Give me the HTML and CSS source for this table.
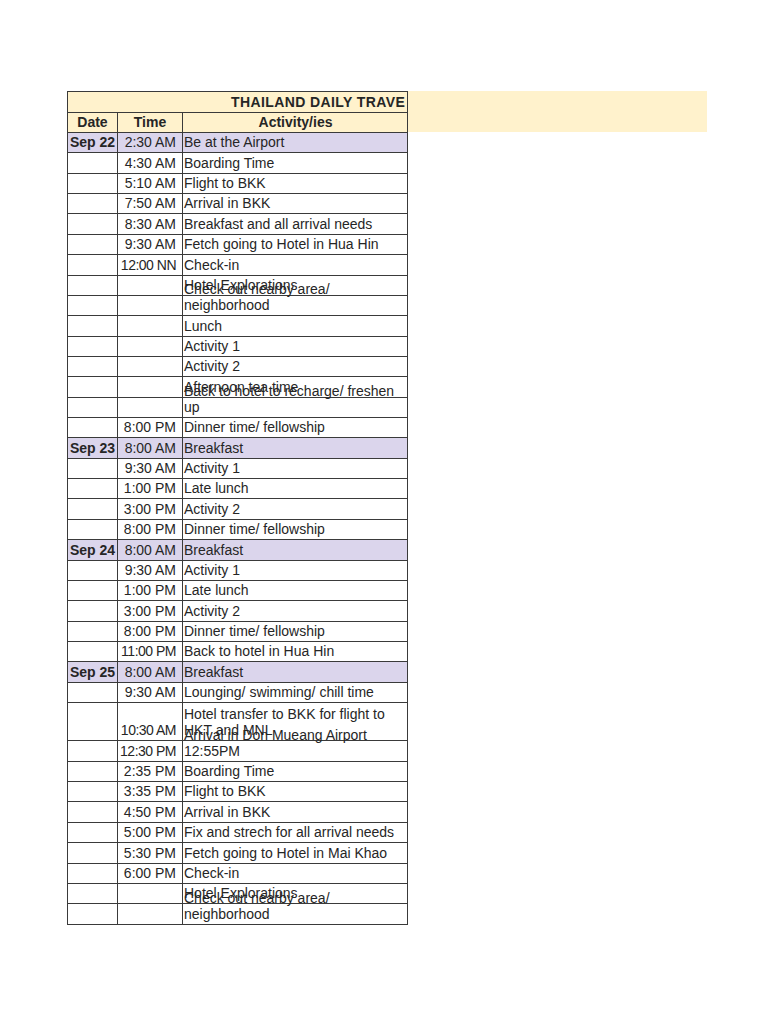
FILE: index.html
```html
<!DOCTYPE html>
<html lang="en">
<head>
<meta charset="utf-8">
<title>Thailand Daily Travel Itinerary</title>
<link rel="stylesheet" href="styles.css">
</head>
<body>
<div class="page">
  <div class="sheet-wrap">
    <div class="sheet">
      <div class="row title"><div class="cell title-cell"><span>THAILAND DAILY TRAVE</span></div></div>
      <div class="row head">
        <div class="cell c-date"><span>Date</span></div>
        <div class="cell c-time"><span>Time</span></div>
        <div class="cell c-act"><span>Activity/ies</span></div>
      </div>

      <div class="row day"><div class="cell c-date"><span>Sep 22</span></div><div class="cell c-time"><span>2:30 AM</span></div><div class="cell c-act"><span>Be at the Airport</span></div></div>
      <div class="row"><div class="cell c-date"></div><div class="cell c-time"><span>4:30 AM</span></div><div class="cell c-act"><span>Boarding Time</span></div></div>
      <div class="row"><div class="cell c-date"></div><div class="cell c-time"><span>5:10 AM</span></div><div class="cell c-act"><span>Flight to BKK</span></div></div>
      <div class="row"><div class="cell c-date"></div><div class="cell c-time"><span>7:50 AM</span></div><div class="cell c-act"><span>Arrival in BKK</span></div></div>
      <div class="row"><div class="cell c-date"></div><div class="cell c-time"><span>8:30 AM</span></div><div class="cell c-act"><span>Breakfast and all arrival needs</span></div></div>
      <div class="row"><div class="cell c-date"></div><div class="cell c-time"><span>9:30 AM</span></div><div class="cell c-act"><span>Fetch going to Hotel in Hua Hin</span></div></div>
      <div class="row"><div class="cell c-date"></div><div class="cell c-time"><span class="narrow">12:00 NN</span></div><div class="cell c-act"><span>Check-in</span></div></div>
      <div class="row"><div class="cell c-date"></div><div class="cell c-time"></div><div class="cell c-act"><span>Hotel Explorations</span></div></div>
      <div class="row"><div class="cell c-date"></div><div class="cell c-time"></div><div class="cell c-act"><span>Check out nearby area/<br>neighborhood</span></div></div>
      <div class="row"><div class="cell c-date"></div><div class="cell c-time"></div><div class="cell c-act"><span>Lunch</span></div></div>
      <div class="row"><div class="cell c-date"></div><div class="cell c-time"></div><div class="cell c-act"><span>Activity 1</span></div></div>
      <div class="row"><div class="cell c-date"></div><div class="cell c-time"></div><div class="cell c-act"><span>Activity 2</span></div></div>
      <div class="row"><div class="cell c-date"></div><div class="cell c-time"></div><div class="cell c-act"><span>Afternoon tea time</span></div></div>
      <div class="row"><div class="cell c-date"></div><div class="cell c-time"></div><div class="cell c-act"><span>Back to hotel to recharge/ freshen<br>up</span></div></div>
      <div class="row"><div class="cell c-date"></div><div class="cell c-time"><span>8:00 PM</span></div><div class="cell c-act"><span>Dinner time/ fellowship</span></div></div>

      <div class="row day"><div class="cell c-date"><span>Sep 23</span></div><div class="cell c-time"><span>8:00 AM</span></div><div class="cell c-act"><span>Breakfast</span></div></div>
      <div class="row"><div class="cell c-date"></div><div class="cell c-time"><span>9:30 AM</span></div><div class="cell c-act"><span>Activity 1</span></div></div>
      <div class="row"><div class="cell c-date"></div><div class="cell c-time"><span>1:00 PM</span></div><div class="cell c-act"><span>Late lunch</span></div></div>
      <div class="row"><div class="cell c-date"></div><div class="cell c-time"><span>3:00 PM</span></div><div class="cell c-act"><span>Activity 2</span></div></div>
      <div class="row"><div class="cell c-date"></div><div class="cell c-time"><span>8:00 PM</span></div><div class="cell c-act"><span>Dinner time/ fellowship</span></div></div>

      <div class="row day"><div class="cell c-date"><span>Sep 24</span></div><div class="cell c-time"><span>8:00 AM</span></div><div class="cell c-act"><span>Breakfast</span></div></div>
      <div class="row"><div class="cell c-date"></div><div class="cell c-time"><span>9:30 AM</span></div><div class="cell c-act"><span>Activity 1</span></div></div>
      <div class="row"><div class="cell c-date"></div><div class="cell c-time"><span>1:00 PM</span></div><div class="cell c-act"><span>Late lunch</span></div></div>
      <div class="row"><div class="cell c-date"></div><div class="cell c-time"><span>3:00 PM</span></div><div class="cell c-act"><span>Activity 2</span></div></div>
      <div class="row"><div class="cell c-date"></div><div class="cell c-time"><span>8:00 PM</span></div><div class="cell c-act"><span>Dinner time/ fellowship</span></div></div>
      <div class="row"><div class="cell c-date"></div><div class="cell c-time"><span class="narrow">11:00 PM</span></div><div class="cell c-act"><span>Back to hotel in Hua Hin</span></div></div>

      <div class="row day"><div class="cell c-date"><span>Sep 25</span></div><div class="cell c-time"><span>8:00 AM</span></div><div class="cell c-act"><span>Breakfast</span></div></div>
      <div class="row"><div class="cell c-date"></div><div class="cell c-time"><span>9:30 AM</span></div><div class="cell c-act"><span>Lounging/ swimming/ chill time</span></div></div>
      <div class="row tall"><div class="cell c-date"></div><div class="cell c-time"><span class="narrow">10:30 AM</span></div><div class="cell c-act"><span>Hotel transfer to BKK for flight to<br>HKT and MNL</span></div></div>
      <div class="row"><div class="cell c-date"></div><div class="cell c-time"><span class="narrow">12:30 PM</span></div><div class="cell c-act"><span>Arrival in Don Mueang Airport<br>12:55PM</span></div></div>
      <div class="row"><div class="cell c-date"></div><div class="cell c-time"><span>2:35 PM</span></div><div class="cell c-act"><span>Boarding Time</span></div></div>
      <div class="row"><div class="cell c-date"></div><div class="cell c-time"><span>3:35 PM</span></div><div class="cell c-act"><span>Flight to BKK</span></div></div>
      <div class="row"><div class="cell c-date"></div><div class="cell c-time"><span>4:50 PM</span></div><div class="cell c-act"><span>Arrival in BKK</span></div></div>
      <div class="row"><div class="cell c-date"></div><div class="cell c-time"><span>5:00 PM</span></div><div class="cell c-act"><span>Fix and strech for all arrival needs</span></div></div>
      <div class="row"><div class="cell c-date"></div><div class="cell c-time"><span>5:30 PM</span></div><div class="cell c-act"><span>Fetch going to Hotel in Mai Khao</span></div></div>
      <div class="row"><div class="cell c-date"></div><div class="cell c-time"><span>6:00 PM</span></div><div class="cell c-act"><span>Check-in</span></div></div>
      <div class="row"><div class="cell c-date"></div><div class="cell c-time"></div><div class="cell c-act"><span>Hotel Explorations</span></div></div>
      <div class="row"><div class="cell c-date"></div><div class="cell c-time"></div><div class="cell c-act"><span>Check out nearby area/<br>neighborhood</span></div></div>
    </div>
    <div class="title-fill"></div>
  </div>
</div>
</body>
</html>
```

FILE: styles.css
```css
html, body {
  margin: 0;
  padding: 0;
  background: #ffffff;
}

.page {
  padding: 91px 0 0 67px;
  font-family: "Liberation Sans", Arial, sans-serif;
  font-size: 14px;
  color: #262626;
}

.sheet-wrap {
  display: flex;
  align-items: flex-start;
}

.sheet {
  width: 341px;
  box-sizing: border-box;
  border-left: 1px solid #3a3a3a;
  border-top: 1px solid #3a3a3a;
}

.title-fill {
  width: 299px;
  height: 41px;
  background: #fff2cc;
}

.row {
  display: flex;
  height: 20.36px;
}

.row.title {
  height: 21px;
  background: #fff2cc;
}

.row.head {
  height: 20px;
  background: #fff2cc;
  font-weight: bold;
}

.row.day {
  background: #dbd5ec;
}

.row.tall {
  height: 38.3px;
}

.cell {
  box-sizing: border-box;
  display: flex;
  align-items: flex-end;
  border-right: 1px solid #3a3a3a;
  border-bottom: 1px solid #3a3a3a;
  padding-bottom: 2px;
  line-height: 16px;
  white-space: nowrap;
  overflow: visible;
}

.cell span {
  display: block;
}

.title-cell {
  width: 340px;
  padding-left: 163px;
  font-weight: bold;
  letter-spacing: 0.4px;
  overflow: hidden;
}

.c-date {
  width: 50px;
  justify-content: center;
  font-weight: bold;
}

.c-time {
  width: 65px;
  justify-content: flex-end;
  padding-right: 6px;
}

.c-time .narrow {
  letter-spacing: -0.5px;
}

.c-act {
  width: 225px;
  padding-left: 1px;
}

.head .c-time,
.head .c-act {
  justify-content: center;
  padding-right: 0;
}
```
